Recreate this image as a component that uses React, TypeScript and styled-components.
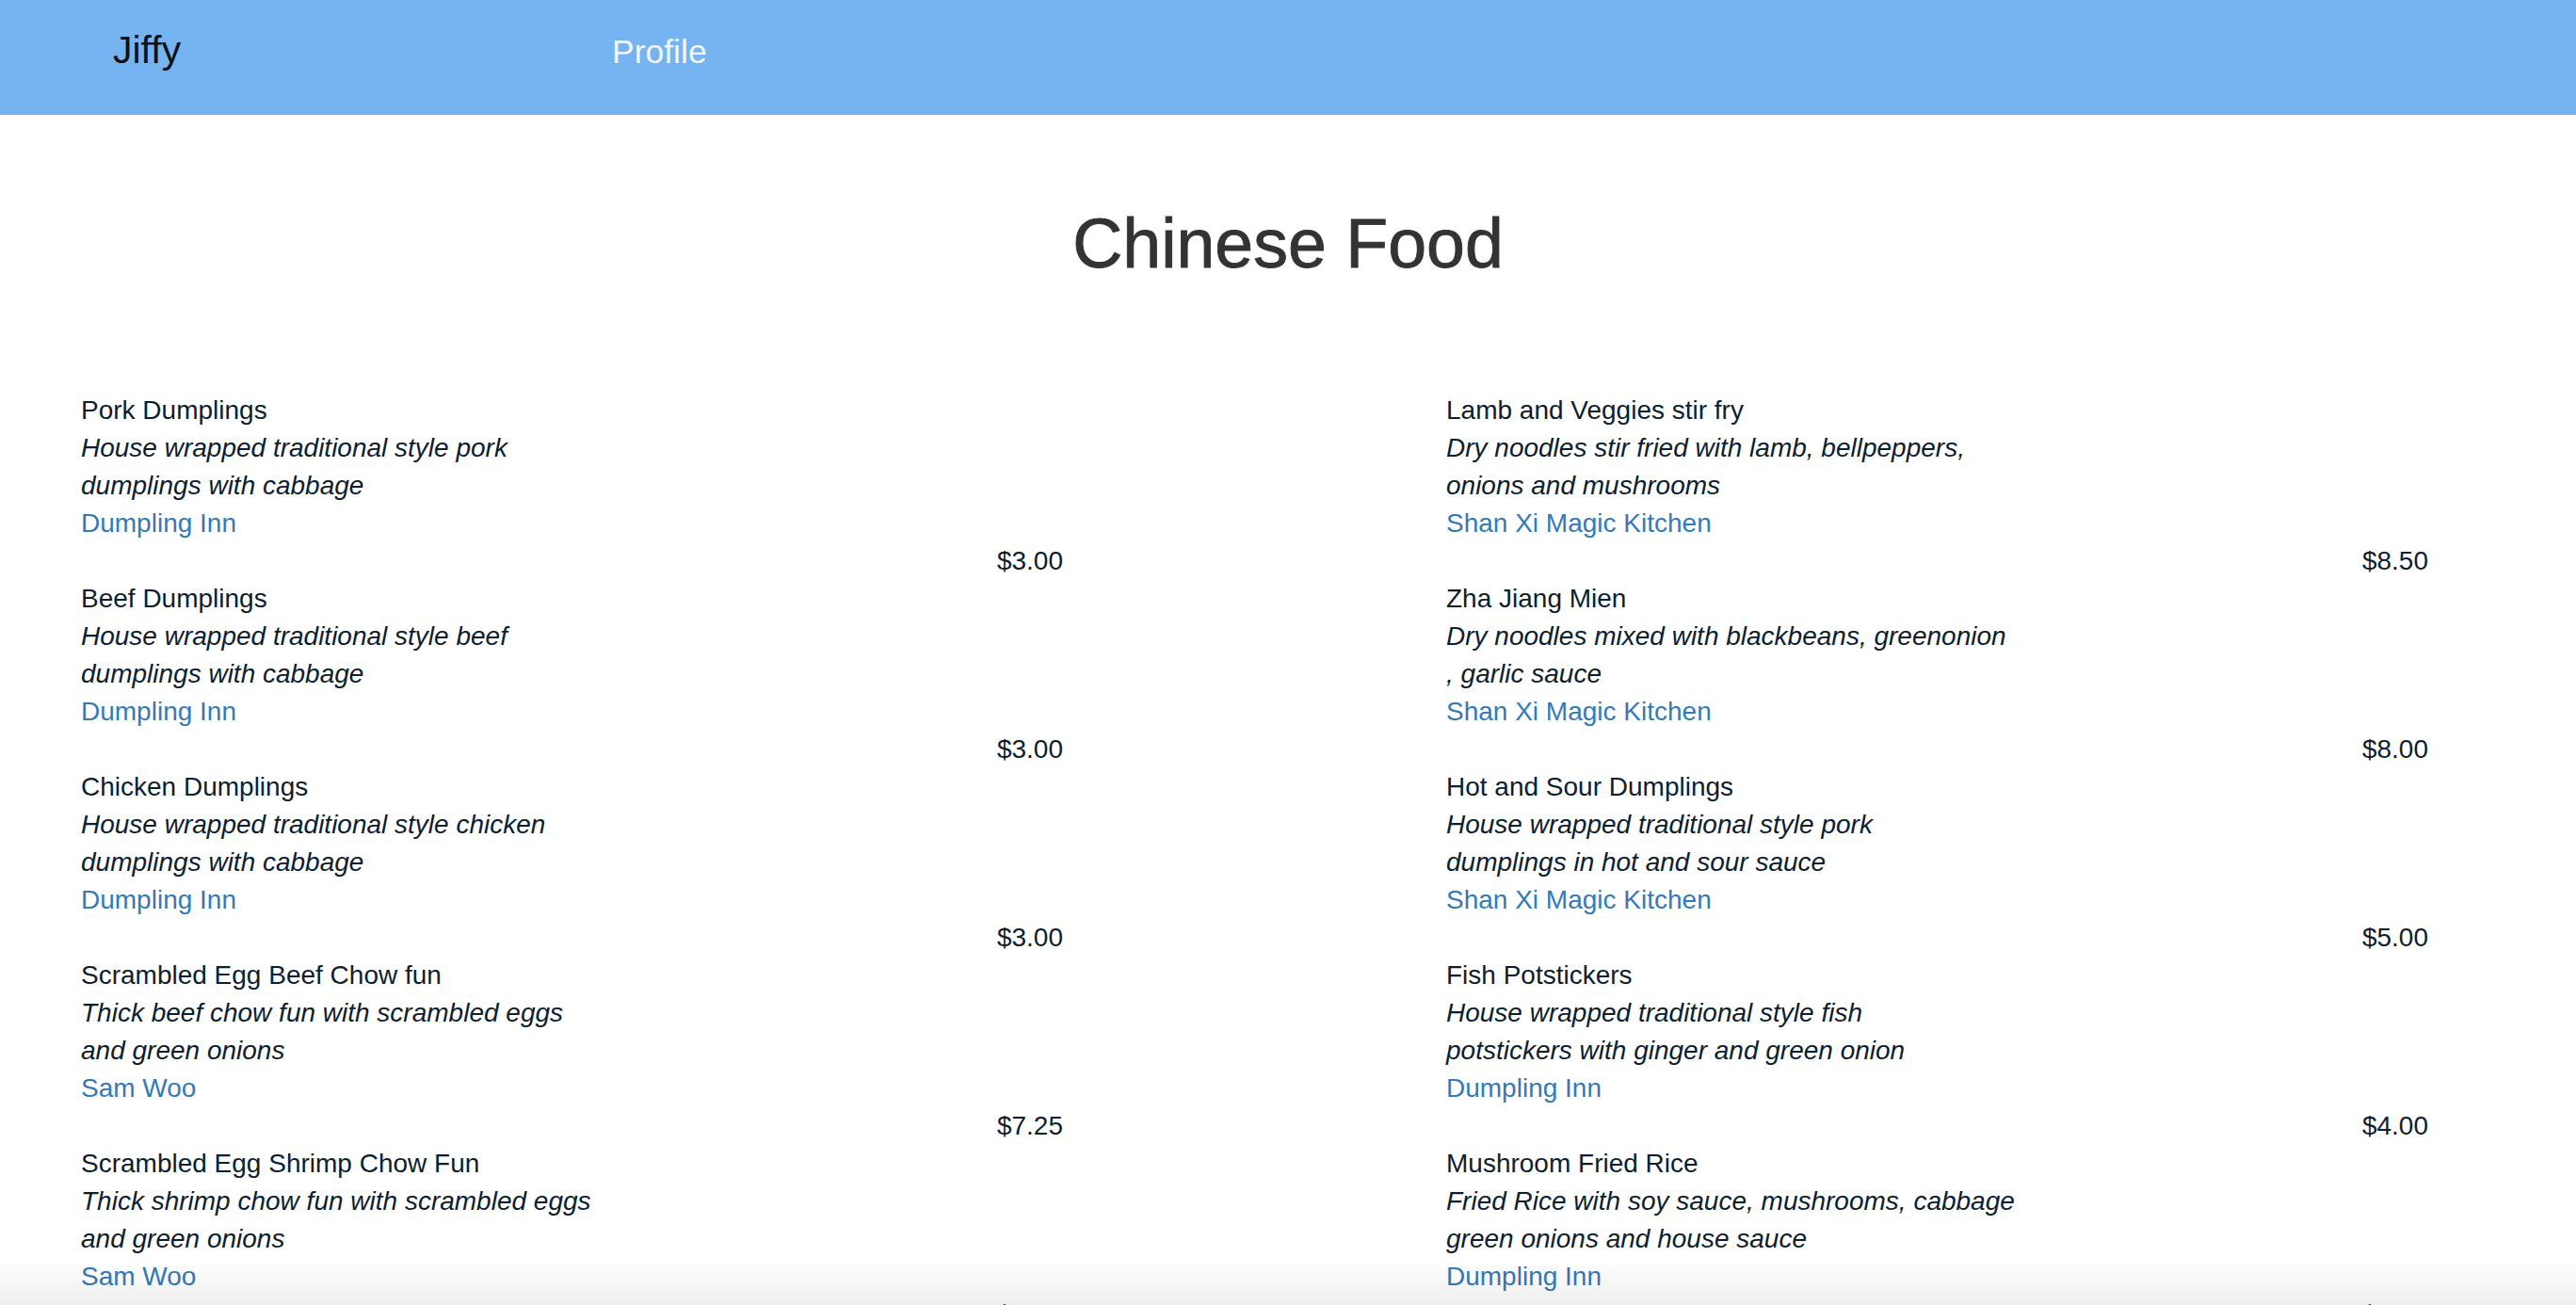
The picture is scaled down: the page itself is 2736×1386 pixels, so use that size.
import React from "react";
import styled, { createGlobalStyle } from "styled-components";

const GlobalStyle = createGlobalStyle`
  html, body {
    margin: 0;
    padding: 0;
    background: #ffffff;
    font-family: "Liberation Sans", Arial, Helvetica, sans-serif;
  }
  * { box-sizing: border-box; }
`;

const Navbar = styled.nav`
  height: 122px;
  background: #75b4f1;
  display: flex;
  align-items: baseline;
  padding: 33px 0 0 120px;
`;

const Brand = styled.a`
  width: 530px;
  font-size: 41px;
  line-height: 41px;
  color: #111111;
  text-decoration: none;
`;

const NavLink = styled.a`
  font-size: 35.5px;
  line-height: 36px;
  color: #f3f6f9;
  text-decoration: none;
`;

const Main = styled.main`
  display: flex;
  flex-direction: column;
`;

const Title = styled.h1`
  margin: 97px 0 116px;
  text-align: center;
  font-size: 73.5px;
  line-height: 1.1;
  font-weight: 400;
  color: #333333;
  -webkit-text-stroke: 0.9px #333333;
`;

const Menu = styled.section`
  display: grid;
  grid-template-columns: 1043px 1043px;
  column-gap: 407px;
  padding-left: 86px;
`;

const Column = styled.div`
  display: flex;
  flex-direction: column;
`;

const Item = styled.article`
  display: flex;
  flex-direction: column;
  font-size: 28px;
  line-height: 40px;
  color: #0d1e30;
`;

const Name = styled.div``;

const Description = styled.div`
  font-style: italic;
`;

const DescLine = styled.span`
  display: block;
`;

const Restaurant = styled.a`
  color: #337ab7;
  text-decoration: none;
`;

const Price = styled.div`
  text-align: right;
`;

const BottomFade = styled.div`
  position: fixed;
  left: 0;
  right: 0;
  bottom: 0;
  height: 48px;
  pointer-events: none;
  mix-blend-mode: multiply;
  background: linear-gradient(to bottom, #ffffff, #eeeeee);
`;

type Dish = {
  name: string;
  desc: string[];
  restaurant: string;
  price: string;
};

const left: Dish[] = [
  {
    name: "Pork Dumplings",
    desc: ["House wrapped traditional style pork", "dumplings with cabbage"],
    restaurant: "Dumpling Inn",
    price: "$3.00",
  },
  {
    name: "Beef Dumplings",
    desc: ["House wrapped traditional style beef", "dumplings with cabbage"],
    restaurant: "Dumpling Inn",
    price: "$3.00",
  },
  {
    name: "Chicken Dumplings",
    desc: ["House wrapped traditional style chicken", "dumplings with cabbage"],
    restaurant: "Dumpling Inn",
    price: "$3.00",
  },
  {
    name: "Scrambled Egg Beef Chow fun",
    desc: ["Thick beef chow fun with scrambled eggs", "and green onions"],
    restaurant: "Sam Woo",
    price: "$7.25",
  },
  {
    name: "Scrambled Egg Shrimp Chow Fun",
    desc: ["Thick shrimp chow fun with scrambled eggs", "and green onions"],
    restaurant: "Sam Woo",
    price: "$7.25",
  },
];

const right: Dish[] = [
  {
    name: "Lamb and Veggies stir fry",
    desc: ["Dry noodles stir fried with lamb, bellpeppers,", "onions and mushrooms"],
    restaurant: "Shan Xi Magic Kitchen",
    price: "$8.50",
  },
  {
    name: "Zha Jiang Mien",
    desc: ["Dry noodles mixed with blackbeans, greenonion", ", garlic sauce"],
    restaurant: "Shan Xi Magic Kitchen",
    price: "$8.00",
  },
  {
    name: "Hot and Sour Dumplings",
    desc: ["House wrapped traditional style pork", "dumplings in hot and sour sauce"],
    restaurant: "Shan Xi Magic Kitchen",
    price: "$5.00",
  },
  {
    name: "Fish Potstickers",
    desc: ["House wrapped traditional style fish", "potstickers with ginger and green onion"],
    restaurant: "Dumpling Inn",
    price: "$4.00",
  },
  {
    name: "Mushroom Fried Rice",
    desc: ["Fried Rice with soy sauce, mushrooms, cabbage", "green onions and house sauce"],
    restaurant: "Dumpling Inn",
    price: "$6.50",
  },
];

const DishItem: React.FC<{ dish: Dish }> = ({ dish }) => (
  <Item>
    <Name>{dish.name}</Name>
    <Description>
      {dish.desc.map((line, i) => (
        <DescLine key={i}>{line}</DescLine>
      ))}
    </Description>
    <Restaurant href="#">{dish.restaurant}</Restaurant>
    <Price>{dish.price}</Price>
  </Item>
);

export default function App() {
  return (
    <>
      <GlobalStyle />
      <Navbar>
        <Brand href="#">Jiffy</Brand>
        <NavLink href="#">Profile</NavLink>
      </Navbar>
      <Main>
        <Title>Chinese Food</Title>
        <Menu>
          <Column>
            {left.map((d) => (
              <DishItem key={d.name} dish={d} />
            ))}
          </Column>
          <Column>
            {right.map((d) => (
              <DishItem key={d.name} dish={d} />
            ))}
          </Column>
        </Menu>
      </Main>
      <BottomFade />
    </>
  );
}
